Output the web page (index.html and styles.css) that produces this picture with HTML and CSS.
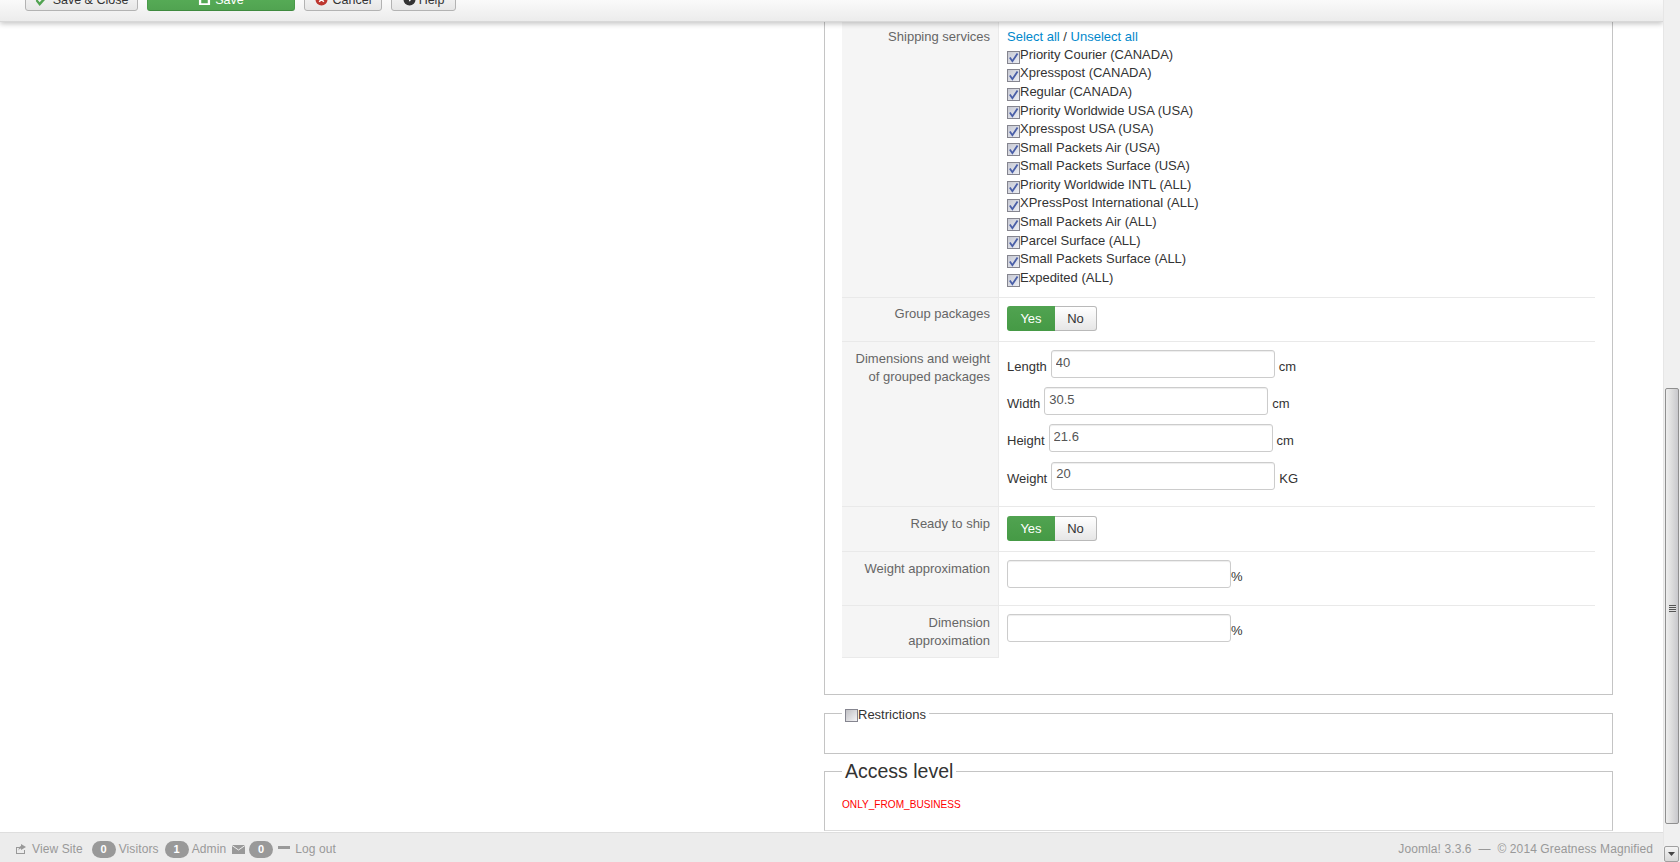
FILE: index.html
```html
<!DOCTYPE html>
<html lang="en">
<head>
<meta charset="utf-8">
<title>Shipping method</title>
<link rel="stylesheet" href="styles.css">
</head>
<body>
<svg class="defs" width="0" height="0" aria-hidden="true">
  <symbol id="tick" viewBox="0 0 9 9"><path d="M1.5 4.5 L3.6 7.5 L7.8 1.2" fill="none" stroke="#4a5fa8" stroke-width="1.5"/></symbol>
</svg>
<div class="app">
  <div class="page">
    <header class="toolbar">
      <button class="tbtn tbtn-close"><svg class="ico" viewBox="0 0 14 14"><path d="M1 5 L5 10 L13 1 L13 5 L5 14 L1 9Z" fill="#51a351"/></svg>Save &amp; Close</button>
      <button class="tbtn tbtn-save"><svg class="ico" viewBox="0 0 14 14"><path d="M1 1H13V13H1Z M3.5 7V11H10.5V7Z" fill="#fff" fill-rule="evenodd"/></svg>Save</button>
      <button class="tbtn tbtn-cancel"><svg class="ico" viewBox="0 0 14 14"><circle cx="7" cy="7" r="6.5" fill="#bd362f"/><path d="M4.5 4.5L9.5 9.5M9.5 4.5L4.5 9.5" stroke="#fff" stroke-width="1.6"/></svg>Cancel</button>
      <button class="tbtn tbtn-help"><svg class="ico" viewBox="0 0 14 14"><circle cx="7" cy="7" r="6.5" fill="#333"/><path d="M5 5.5C5 3 9 3 9 5.5 9 7 7 7 7 9" fill="none" stroke="#fff" stroke-width="1.4"/></svg>Help</button>
    </header>
    <main class="main">
      <fieldset class="fs fs-services">
        <div class="row row-services">
          <div class="lbl">Shipping services</div>
          <div class="val">
            <div class="selects"><a>Select all</a> / <a>Unselect all</a></div>
            <label class="svc"><span class="cb"><svg class="tick"><use href="#tick"/></svg></span>Priority Courier (CANADA)</label>
            <label class="svc"><span class="cb"><svg class="tick"><use href="#tick"/></svg></span>Xpresspost (CANADA)</label>
            <label class="svc"><span class="cb"><svg class="tick"><use href="#tick"/></svg></span>Regular (CANADA)</label>
            <label class="svc"><span class="cb"><svg class="tick"><use href="#tick"/></svg></span>Priority Worldwide USA (USA)</label>
            <label class="svc"><span class="cb"><svg class="tick"><use href="#tick"/></svg></span>Xpresspost USA (USA)</label>
            <label class="svc"><span class="cb"><svg class="tick"><use href="#tick"/></svg></span>Small Packets Air (USA)</label>
            <label class="svc"><span class="cb"><svg class="tick"><use href="#tick"/></svg></span>Small Packets Surface (USA)</label>
            <label class="svc"><span class="cb"><svg class="tick"><use href="#tick"/></svg></span>Priority Worldwide INTL (ALL)</label>
            <label class="svc"><span class="cb"><svg class="tick"><use href="#tick"/></svg></span>XPressPost International (ALL)</label>
            <label class="svc"><span class="cb"><svg class="tick"><use href="#tick"/></svg></span>Small Packets Air (ALL)</label>
            <label class="svc"><span class="cb"><svg class="tick"><use href="#tick"/></svg></span>Parcel Surface (ALL)</label>
            <label class="svc"><span class="cb"><svg class="tick"><use href="#tick"/></svg></span>Small Packets Surface (ALL)</label>
            <label class="svc"><span class="cb"><svg class="tick"><use href="#tick"/></svg></span>Expedited (ALL)</label>
          </div>
        </div>
        <div class="row row-group">
          <div class="lbl">Group packages</div>
          <div class="val val-toggle"><div class="toggle"><span class="yes">Yes</span><span class="no">No</span></div></div>
        </div>
        <div class="row row-dims">
          <div class="lbl">Dimensions and weight<br>of grouped packages</div>
          <div class="val val-dims">
            <div class="dim"><span>Length</span><input class="inp" value="40"><span>cm</span></div>
            <div class="dim"><span>Width</span><input class="inp" value="30.5"><span>cm</span></div>
            <div class="dim"><span>Height</span><input class="inp" value="21.6"><span>cm</span></div>
            <div class="dim"><span>Weight</span><input class="inp" value="20"><span>KG</span></div>
          </div>
        </div>
        <div class="row row-ready">
          <div class="lbl">Ready to ship</div>
          <div class="val val-toggle"><div class="toggle"><span class="yes">Yes</span><span class="no">No</span></div></div>
        </div>
        <div class="row row-approx">
          <div class="lbl">Weight approximation</div>
          <div class="val val-approx"><input class="inp"><span>%</span></div>
        </div>
        <div class="row row-approx row-last">
          <div class="lbl">Dimension<br>approximation</div>
          <div class="val val-approx"><input class="inp"><span>%</span></div>
        </div>
      </fieldset>
      <fieldset class="fs fs-restrict">
        <legend class="leg-small"><span class="cb cb-off"></span>Restrictions</legend>
      </fieldset>
      <fieldset class="fs fs-access">
        <legend class="leg-big">Access level</legend>
        <div class="warn">ONLY_FROM_BUSINESS</div>
      </fieldset>
    </main>
    <footer class="status">
      <div class="status-left">
        <svg class="sico" viewBox="0 0 12 10"><path d="M1 3H5V4H2V9H9V6H10V10H1Z M6 0L11 3 6 6V4.5C4.5 4.5 3.8 5.5 3.5 7 3.5 4 4.5 2.3 6 2Z" fill="#999"/></svg>
        <span class="s-link s-view">View Site</span>
        <span class="badge">0</span><span class="s-link">Visitors</span>
        <span class="badge b2">1</span><span class="s-link">Admin</span>
        <svg class="sico s-mail" viewBox="0 0 13 9"><path d="M0 0H13V9H0Z" fill="#999"/><path d="M0 0.5L6.5 5 13 0.5" fill="none" stroke="#eee" stroke-width="1"/></svg>
        <span class="badge b3">0</span>
        <span class="dash"></span>
        <span class="s-link">Log out</span>
      </div>
      <div class="status-right">Joomla! 3.3.6 &nbsp;— &nbsp;© 2014 Greatness Magnified</div>
    </footer>
  </div>
  <aside class="sbar">
    <div class="sbar-track"><div class="sbar-thumb"><span class="grip"></span></div></div>
    <div class="sbar-btn"><svg width="7" height="4" viewBox="0 0 7 4"><path d="M0 0H7L3.5 4Z" fill="#444"/></svg></div>
  </aside>
</div>
</body>
</html>
```

FILE: styles.css
```css
* { box-sizing: border-box; }
html, body { margin: 0; height: 100%; overflow: hidden; }
body { font-family: "Liberation Sans", Arial, sans-serif; font-size: 13px; color: #333; background: #fff; }
.defs { display: block; height: 0; }
.app { display: flex; width: 1680px; height: 862px; }
.page { width: 1663px; display: flex; flex-direction: column; position: relative; }

.toolbar { height: 22px; flex: none; display: flex; align-items: flex-end; padding: 0 0 10px 25px; gap: 9px;
  background: linear-gradient(#fafafa, #ececec); border-bottom: 1px solid #d8d8d8; box-shadow: 0 2px 5px rgba(0,0,0,.22); position: relative; z-index: 2; clip-path: inset(0 0 -10px 0); }
.tbtn { height: 28px; flex: none; font: 12.5px "Liberation Sans", Arial, sans-serif; color: #333; border: 1px solid #b3b3b3; border-radius: 3px; background: linear-gradient(#fff, #e6e6e6); display: flex; align-items: center; justify-content: center; gap: 5px; padding: 5px 0 0; }
.ico { width: 13px; height: 13px; flex: none; }
.tbtn-close { width: 113px; }
.tbtn-save { width: 148px; gap: 4px; background: linear-gradient(#5cb65c, #51a351); border-color: #4a9a4a #4a9a4a #3f8a3f; color: #fff; }
.tbtn-cancel { width: 78px; }
.tbtn-help { width: 65px; gap: 3px; }

.main { flex: 1; min-height: 0; overflow: hidden; padding-left: 824px; width: 1614px; }
.fs { margin: 0; padding: 0; border: 1px solid #c4c4c4; width: 789px; min-inline-size: 0; }
.fs-services { border-top: 0; height: 673px; padding-left: 17px; }

.row { display: flex; width: 753px; }
.lbl { width: 157px; flex: none; background: #f5f5f5; border-right: 1px solid #eaeaea; color: #666; text-align: right; padding: 8px 8px 0 0; line-height: 18px; }
.val { flex: 1; padding: 0 0 0 8px; }
.row + .row { border-top: 1px solid #e9e9e9; }
.row-services { height: 275px; }
.row-services .lbl { padding-top: 6px; }
.selects { padding-top: 5.8px; line-height: 18px; }
.selects a { color: #0088cc; }
.svc { display: flex; height: 18.58px; line-height: 18.58px; align-items: center; color: #333; }
.cb { display: block; width: 13px; height: 13px; flex: none; margin-top: 4px; border: 1px solid #85858f; background: linear-gradient(135deg, #c6c8d2, #eceef4); }
.tick { display: block; width: 11px; height: 11px; }

.row-group { height: 44px; }
.row-group .lbl { padding-top: 7px; }
.row-group .val-toggle { padding-top: 8px; }
.row-ready { height: 45px; }
.val-toggle { padding-top: 9px; }
.toggle { display: flex; height: 25px; width: 90px; }
.yes, .no { display: flex; align-items: center; justify-content: center; }
.yes { width: 48px; background: linear-gradient(#51a351, #459a45); color: #fff; border-radius: 3px 0 0 3px; }
.no { width: 42px; background: linear-gradient(#fff, #e6e6e6); border: 1px solid #b9b9b9; border-left: 0; border-radius: 0 3px 3px 0; color: #333; }

.row-dims { height: 165px; }
.val-dims { padding-top: 8px; }
.dim { display: flex; align-items: flex-start; height: 28px; margin-bottom: 9.2px; }
.dim span { padding-top: 9px; line-height: 16px; color: #333; }
.inp { width: 224px; height: 28px; margin: 0 4px; padding: 0 4px 4px; font: 13px "Liberation Sans", Arial, sans-serif; color: #555; border: 1px solid #ccc; border-radius: 3px; box-shadow: inset 0 1px 1px rgba(0,0,0,.075); background: #fff; outline: 0; }

.row-approx { height: 54px; }
.row-last { height: 53px; }
.row-last .lbl { border-bottom: 1px solid #eaeaea; }
.val-approx { display: flex; padding-top: 8px; align-items: flex-start; }
.val-approx .inp { margin: 0; }
.val-approx span { padding-top: 9px; line-height: 16px; }

.fs-restrict { height: 51px; margin-top: 8px; padding-left: 17px; }
.fs legend { margin: 0; }
.leg-small { padding: 4px 3px 0; display: flex; line-height: 16px; color: #333; }
.leg-small .cb { margin-top: 2px; background: linear-gradient(135deg, #c0c0c4, #f4f4f6); }
.fs-access { margin-top: 4px; height: 73px; padding-left: 17px; border-bottom-color: #dcdcdc; }
.leg-big { padding: 0 3px; font-size: 19.5px; line-height: 26px; color: #333; }
.warn { color: #ff0000; font-size: 10.1px; line-height: 14px; padding-top: 14px; }

.status { height: 30px; flex: none; background: #ececec; border-top: 1px solid #dedede; display: flex; justify-content: space-between; align-items: center; padding: 3px 10px 0 15px; color: #999; font-size: 12px; letter-spacing: .1px; }
.status-left { display: flex; align-items: center; }
.sico { width: 12px; height: 10px; flex: none; }
.s-link { color: #999; }
.s-view { margin-left: 5px; margin-right: 9px; }
.badge { width: 24px; height: 17px; border-radius: 9px; background: #999; color: #fff; font-size: 11px; font-weight: bold; display: flex; align-items: center; justify-content: center; margin-right: 3px; }
.b2 { margin-left: 6px; }
.s-mail { width: 13px; height: 9px; margin: 0 4px 0 6px; }
.b3 { margin-right: 5px; }
.dash { width: 12px; height: 3px; background: #999; margin-right: 5px; margin-top: -3px; }

.sbar { width: 17px; flex: none; display: flex; flex-direction: column; background: #f0f0f0; }
.sbar-track { flex: 1; padding: 388px 1px 22px; border-left: 1px solid #e6e6e6; }
.sbar-thumb { height: 100%; border: 1px solid #8f8f8f; border-radius: 2px; background: linear-gradient(90deg, #eee, #dcdcdc 50%, #c8c8cc); position: relative; }
.grip { position: absolute; top: 216px; left: 3px; width: 7px; height: 8px; background: repeating-linear-gradient(#555 0 1px, #ddd 1px 2px); }
.sbar-btn { height: 16px; flex: none; margin: 0 1px; border: 1px solid #a0a0a0; border-radius: 2px; background: linear-gradient(#f4f4f4, #d8d8d8); display: flex; align-items: center; justify-content: center; }
```
